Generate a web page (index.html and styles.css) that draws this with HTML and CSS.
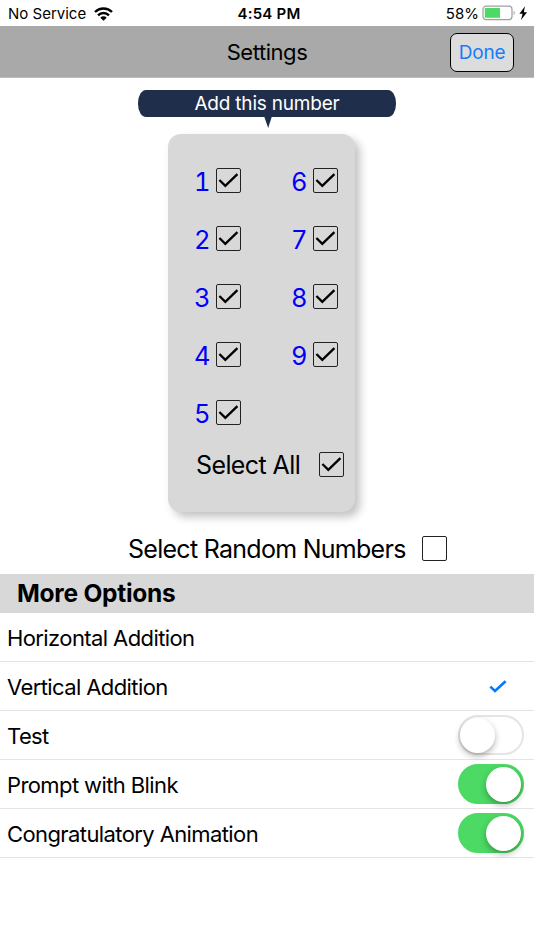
FILE: index.html
```html
<!DOCTYPE html>
<html lang="en">

<head>
    <meta charset="UTF-8">
    <meta name="viewport" content="width=device-width, initial-scale=1.0">
    <title>Settings</title>
    <link rel="stylesheet" href="styles.css">
</head>

<body>
    <!-- Check mark shared by all the checkboxes -->
    <svg class="defs" width="0" height="0">
        <symbol id="tick" viewBox="0 0 25 25">
            <path d="M3.4 12 L9.3 17.8 L21.4 6.2" fill="none" stroke="#000" stroke-width="2.3" />
        </symbol>
    </svg>

    <div class="status-bar">
        <div class="status-left">
            <span class="carrier">No Service</span>
            <svg class="wifi" width="19" height="14" viewBox="0 0 19 14">
                <g fill="none" stroke="#000" stroke-width="2.4">
                    <path d="M1 5 A12.2 12.2 0 0 1 18 5" />
                    <path d="M4 8.3 A7.8 7.8 0 0 1 15 8.3" />
                </g>
                <path d="M6.3 10.7 A4.5 4.5 0 0 1 12.7 10.7 L9.5 13.8 Z" />
            </svg>
        </div>
        <span class="time">4:54 PM</span>
        <div class="status-right">
            <span class="percent">58%</span>
            <svg class="battery" width="46" height="16" viewBox="0 0 46 16">
                <rect x="1" y="1.2" width="29" height="13.4" rx="3" fill="#fff" stroke="#a0a0a0" stroke-width="1.2" />
                <rect x="2.8" y="3" width="15.2" height="9.8" rx="0.6" fill="#4cd964" />
                <path d="M31.6 5.6 Q34 8 31.6 10.4 Z" fill="#a0a0a0" />
                <path d="M43 1.2 L37.4 8.8 H40.6 L39 15 L45 7.2 H41.8 Z" />
            </svg>
        </div>
    </div>

    <header>
        <h1>Settings</h1>
        <button class="done">Done</button>
    </header>

    <main>
        <div class="callout">
            <span>Add this number</span>
            <svg class="callout-tip" width="8" height="12" viewBox="0 0 8 12">
                <path d="M0 0 H8 L4.2 12 Z" fill="#1f2f4b" />
            </svg>
        </div>

        <div class="panel">
            <div class="numbers">
                <div class="number"><span>1</span><i class="checkbox"><svg><use href="#tick" /></svg></i></div>
                <div class="number"><span>2</span><i class="checkbox"><svg><use href="#tick" /></svg></i></div>
                <div class="number"><span>3</span><i class="checkbox"><svg><use href="#tick" /></svg></i></div>
                <div class="number"><span>4</span><i class="checkbox"><svg><use href="#tick" /></svg></i></div>
                <div class="number"><span>5</span><i class="checkbox"><svg><use href="#tick" /></svg></i></div>
                <div class="number"><span>6</span><i class="checkbox"><svg><use href="#tick" /></svg></i></div>
                <div class="number"><span>7</span><i class="checkbox"><svg><use href="#tick" /></svg></i></div>
                <div class="number"><span>8</span><i class="checkbox"><svg><use href="#tick" /></svg></i></div>
                <div class="number"><span>9</span><i class="checkbox"><svg><use href="#tick" /></svg></i></div>
            </div>
            <div class="select-all">
                <span>Select All</span>
                <i class="checkbox"><svg><use href="#tick" /></svg></i>
            </div>
        </div>

        <div class="random">
            <span>Select Random Numbers</span>
            <i class="checkbox"></i>
        </div>

        <h2>More Options</h2>
        <ul class="options">
            <li><span>Horizontal Addition</span></li>
            <li>
                <span>Vertical Addition</span>
                <svg class="selected" width="18" height="14" viewBox="0 0 18 14">
                    <path d="M1.3 6.6 L6 11 L16.6 1.3" fill="none" stroke="#007aff" stroke-width="2.6" />
                </svg>
            </li>
            <li><span>Test</span><div class="switch"></div></li>
            <li><span>Prompt with Blink</span><div class="switch on"></div></li>
            <li><span>Congratulatory Animation</span><div class="switch on"></div></li>
        </ul>
    </main>
</body>

</html>
```

FILE: styles.css
```css
* {
    box-sizing: border-box;
}

body {
    font-family: 'Inter', sans-serif;
    margin: 0;
    padding: 0;
    background-color: #fff;
    color: #000;
    white-space: nowrap;
}

svg {
    display: block;
}

.defs {
    position: absolute;
}

/* Status bar */
.status-bar {
    display: grid;
    grid-template-columns: 1fr auto 1fr;
    align-items: center;
    height: 26px;
    padding: 1px 6px 0 8px;
    font-size: 15px;
    line-height: 26px;
}

.status-left,
.status-right {
    display: flex;
    align-items: center;
}

.status-left {
    gap: 8px;
}

.status-right {
    justify-content: flex-end;
    gap: 3px;
}

.wifi {
    margin-top: -1px;
}

.battery {
    margin-top: -2px;
}

.time {
    padding-left: 2px;
    font-weight: 600;
    letter-spacing: 0.2px;
}

/* Title bar */
header {
    display: grid;
    grid-template-columns: 1fr auto 1fr;
    align-items: center;
    height: 52px;
    padding: 0 20px;
    background-color: #a9a9a9;
    border-bottom: 1px solid #bdbdbd;
}

h1 {
    grid-column: 2;
    margin: 0;
    font-size: 22px;
    font-weight: 400;
    letter-spacing: -0.45px;
    line-height: 52px;
}

.done {
    justify-self: end;
    width: 64px;
    height: 39px;
    padding: 0;
    background-color: #dcdcdc;
    border: 1.5px solid #000;
    border-radius: 7px;
    color: #157efb;
    font-family: inherit;
    font-size: 19px;
    letter-spacing: -0.2px;
}

/* Speech bubble above the panel */
.callout {
    position: relative;
    width: 258px;
    height: 27px;
    margin: 12.4px 0 0 138px;
    border-radius: 8px / 13px;
    background-color: #1f2f4b;
    color: #fff;
    font-size: 19px;
    letter-spacing: -0.2px;
    line-height: 28px;
    text-align: center;
}

.callout-tip {
    position: absolute;
    left: 126px;
    top: 26px;
}

/* Number panel */
.panel {
    width: 187px;
    height: 378px;
    margin: 17.1px 0 0 168px;
    padding: 17px 0 0 27px;
    border-radius: 13px;
    background-color: #d8d8d8;
    box-shadow: 5px 5px 8px rgba(0, 0, 0, 0.24);
    font-size: 25px;
}

.numbers {
    display: grid;
    grid-template-rows: repeat(5, 58px);
    grid-auto-flow: column;
    grid-auto-columns: 97px;
}

.number {
    display: flex;
    align-items: center;
    color: #0000f8;
    font-size: 25.5px;
    font-variant-numeric: tabular-nums;
}

.number span {
    width: 21px;
    padding: 2px 5.5px 0 0;
    display: flex;
    justify-content: flex-end;
}

.checkbox {
    flex: none;
    width: 25px;
    height: 25px;
    border: 1.4px solid #222;
    border-radius: 2px;
}

.checkbox svg {
    width: 25px;
    height: 25px;
    margin: -1px;
}

.select-all {
    display: flex;
    align-items: center;
    justify-content: space-between;
    height: 46px;
    padding-right: 11px;
    letter-spacing: -0.6px;
}

.select-all span,
.random span {
    padding: 2px 0 0 1px;
}

.random {
    display: flex;
    align-items: center;
    justify-content: space-between;
    height: 61.5px;
    padding: 10px 87px 0 127px;
    font-size: 25px;
    letter-spacing: -0.72px;
}

/* Options list */
h2 {
    height: 39px;
    margin: 0;
    padding-left: 17px;
    background-color: #d8d8d8;
    font-size: 24.5px;
    font-weight: 700;
    letter-spacing: -0.25px;
    line-height: 39px;
}

.options {
    margin: 0;
    padding: 0;
    list-style: none;
    font-size: 22px;
    letter-spacing: -0.6px;
}

.options li {
    display: flex;
    align-items: center;
    justify-content: space-between;
    height: 49px;
    padding: 0 10.5px 0 7px;
    border-bottom: 1px solid #e4e4e4;
}

.options span {
    padding-top: 2px;
}

.selected {
    margin: 2px 16.5px 0 0;
}

.switch {
    width: 66px;
    height: 40px;
    margin-top: 1px;
    padding: 2px;
    border: 2px solid #e5e5e5;
    border-radius: 20px;
}

.switch::before {
    content: "";
    display: block;
    width: 35px;
    height: 35px;
    margin-top: -1.5px;
    margin-left: -1.5px;
    border-radius: 50%;
    background-color: #fff;
    box-shadow: 0 3px 6px rgba(0, 0, 0, 0.3);
}

.switch.on {
    border-color: #4cd964;
    background-color: #4cd964;
}

.switch.on::before {
    margin-left: 24.5px;
}
```
